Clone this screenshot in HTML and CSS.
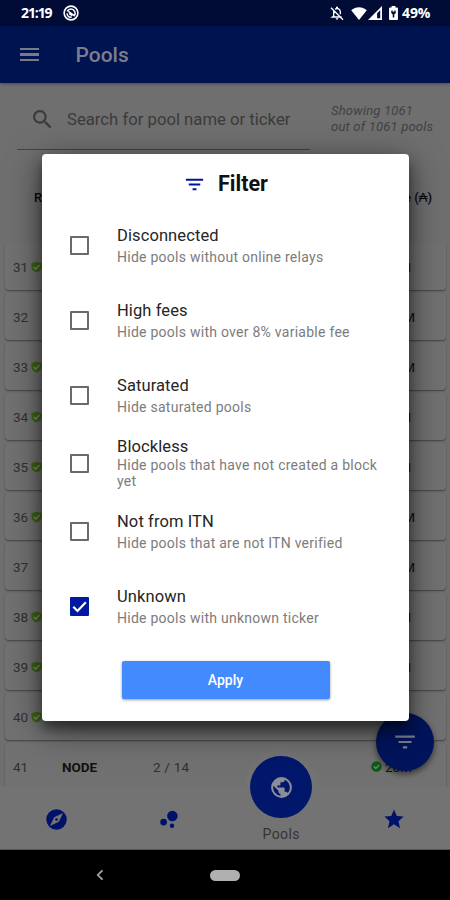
FILE: index.html
```
<!DOCTYPE html>
<html lang="en">
<head>
<meta charset="utf-8">
<title>Pools</title>
<link rel="stylesheet" href="styles.css">
</head>
<body>
<svg width="0" height="0" class="defs">
  <symbol id="shield" viewBox="0 0 22 24"><path fill="#3d6516" d="M11 1 1 4.500v7.500c0 6 4.500 9.500 10 11 5.500-1.500 10-5 10-11V4.500z"/><path fill="none" stroke="#858b7c" stroke-width="2.600" d="m5.500 12 4 4 7.500-8"/></symbol>
  <symbol id="filter" viewBox="0 0 24 24"><path d="M10 18h4v-2h-4v2zM3 6v2h18V6H3zm3 7h12v-2H6v2z"/></symbol>
</svg>
<div class="phone">
  <div class="status">
    <span class="clock">21:19</span>
    <svg class="app-mark" viewBox="0 0 24 24"><circle cx="12" cy="12" r="10.300" fill="none" stroke="#fff" stroke-width="2.400"/><path fill="none" stroke="#fff" stroke-width="2.200" d="M6 9.500c3-4.500 9-4.500 11.500 0 1.500 3 .5 5-.5 6.500L8 9.500M6 12.500c0 4 3 6.500 7 5.500M9 13l5 3"/></svg>
    <span class="grow"></span>
    <svg class="bell" viewBox="0 0 24 24"><path fill="none" stroke="#fff" stroke-width="2" d="M7 9v7.500L5 18h14M9 6.500c4-3 8 0 8 4V14M3 4l18 18"/><path fill="#fff" d="M10 20h4a2 2 0 0 1-4 0zM10.500 2.500h3V6h-3z"/></svg>
    <svg class="wifi" viewBox="0 0 24 20"><path fill="#fff" d="M12 20 0 5c7-6 17-6 24 0z"/></svg>
    <svg class="signal" viewBox="0 0 20 20"><path fill="#fff" d="M0 20 20 0v20z"/><path fill="#000c35" d="M13 10.500 17.500 6v11.500H13z"/></svg>
    <svg class="battery" viewBox="0 0 14 22"><path fill="#fff" d="M1.500 2.500H4V0h6v2.500h2.500A1.500 1.500 0 0 1 14 4v16.500a1.500 1.500 0 0 1-1.500 1.500h-11A1.500 1.500 0 0 1 0 20.500V4a1.500 1.500 0 0 1 1.500-1.500z"/><path fill="#000c35" d="M3.500 7h2.200v2h2.600V7h2.200v4L8.200 13.500V18H5.800v-4.500L3.500 11z"/></svg>
    <span class="percent">49%</span>
  </div>
  <header class="appbar">
    <span class="menu"><i></i><i></i><i></i></span>
    <h1>Pools</h1>
  </header>
  <div class="search-row">
    <div class="search">
      <svg viewBox="0 0 24 24"><path d="M15.500 14h-.8l-.3-.3A6.500 6.500 0 1 0 13.700 14.400l.3.300v.8l5 5 1.500-1.500zm-6 0a4.500 4.500 0 1 1 0-9 4.500 4.500 0 0 1 0 9z"/></svg>
      <span>Search for pool name or ticker</span>
    </div>
    <p class="count">Showing 1061<br>out of 1061 pools</p>
  </div>
  <div class="thead"><span>Rank</span><span class="stake">Stake (₳)</span></div>
  <main class="list">
    <div class="card"><span class="rank">31</span><svg class="shield"><use href="#shield"/></svg><span class="amount dense">20M</span></div>
    <div class="card"><span class="rank">32</span><span class="amount">20M</span></div>
    <div class="card"><span class="rank">33</span><svg class="shield"><use href="#shield"/></svg><span class="amount">20M</span></div>
    <div class="card"><span class="rank">34</span><svg class="shield"><use href="#shield"/></svg><span class="amount dense">20M</span></div>
    <div class="card"><span class="rank">35</span><svg class="shield"><use href="#shield"/></svg><span class="amount dense">20M</span></div>
    <div class="card"><span class="rank">36</span><svg class="shield"><use href="#shield"/></svg><span class="amount">20M</span></div>
    <div class="card"><span class="rank">37</span><span class="amount">20M</span></div>
    <div class="card"><span class="rank">38</span><svg class="shield"><use href="#shield"/></svg><span class="amount dense">20M</span></div>
    <div class="card"><span class="rank">39</span><svg class="shield"><use href="#shield"/></svg><span class="amount dense">20M</span></div>
    <div class="card"><span class="rank">40</span><svg class="shield"><use href="#shield"/></svg></div>
    <div class="card last"><span class="rank">41</span><b class="ticker">NODE</b><span class="blocks">2 / 14</span>
      <svg class="ok" viewBox="0 0 24 24"><circle cx="12" cy="12" r="11.500" fill="#0c5c18"/><path fill="none" stroke="#7b8c7d" stroke-width="2.800" d="m6.500 12 4 4 7.500-7.500"/></svg><span class="node-amount">20M</span></div>
  </main>
  <nav class="tabs">
    <span class="tab"><svg class="compass" viewBox="0 0 24 24"><circle cx="12" cy="12" r="11.700"/><path fill="#737373" d="m19.500 4.500-4.800 10.200-10.200 4.800L9.300 9.300z"/><circle cx="12" cy="12" r="1.500"/></svg></span>
    <span class="tab"><svg class="bubbles" viewBox="0 0 24 24"><circle cx="16.500" cy="8" r="7"/><circle cx="4.800" cy="16" r="4.500"/><circle cx="16" cy="21" r="2.900"/></svg></span>
    <span class="tab active"><span class="orb"><svg viewBox="0 0 24 24"><path d="M12 2a10 10 0 1 0 0 20 10 10 0 0 0 0-20zm-1 17.900A8 8 0 0 1 4.200 10.200L9 15v1a2 2 0 0 0 2 2zm6.900-2.500A2 2 0 0 0 16 16h-1v-3a1 1 0 0 0-1-1H8v-2h2a1 1 0 0 0 1-1V7h2a2 2 0 0 0 2-2v-.4a8 8 0 0 1 2.900 12.800z"/></svg></span><span class="label">Pools</span></span>
    <span class="tab"><svg class="star" viewBox="0 0 24 24"><path d="m12 17.800 6.600 4.200-1.700-7.600 5.600-5.100-7.500-.6L12 1.500 9 8.700l-7.500.6 5.600 5.100L5.400 22z"/></svg></span>
  </nav>
  <div class="sysnav"><svg class="back" viewBox="0 0 10 14"><path d="M8.500 1.500 3 7l5.500 5.500"/></svg><span class="pill"></span></div>
  <div class="fab"><svg><use href="#filter"/></svg></div>

  <section class="dialog">
    <h2><svg><use href="#filter"/></svg>Filter</h2>
    <label class="option"><span class="box"></span><span class="copy"><span class="name">Disconnected</span><small>Hide pools without online relays</small></span></label>
    <label class="option"><span class="box"></span><span class="copy"><span class="name">High fees</span><small>Hide pools with over 8% variable fee</small></span></label>
    <label class="option"><span class="box"></span><span class="copy"><span class="name">Saturated</span><small>Hide saturated pools</small></span></label>
    <label class="option compact"><span class="box"></span><span class="copy"><span class="name">Blockless</span><small>Hide pools that have not created a block yet</small></span></label>
    <label class="option"><span class="box"></span><span class="copy"><span class="name">Not from ITN</span><small>Hide pools that are not ITN verified</small></span></label>
    <label class="option"><span class="box checked"><svg viewBox="0 0 19 19"><path d="m3.300 9.800 4.200 4.200 8.300-8.700"/></svg></span><span class="copy"><span class="name">Unknown</span><small>Hide pools with unknown ticker</small></span></label>
    <button class="apply">Apply</button>
  </section>
</div>
</body>
</html>
```
FILE: styles.css
```
* { box-sizing: border-box; }
body { margin: 0; font-family: Roboto, "Liberation Sans", sans-serif; background: #000; }
.defs { position: absolute; }
.phone { position: relative; width: 450px; height: 900px; overflow: hidden; background: #6f6f6f; display: flex; flex-direction: column; }
.status { height: 26px; flex: none; background: #000c35; color: #fff; display: flex; align-items: center; padding: 0 19px 0 21px; font: 700 14px/26px "Open Sans", Roboto, sans-serif; }
.clock { letter-spacing: -1.1px; width: 42px; }
.app-mark { width: 16px; height: 16px; }
.grow { flex: 1; }
.bell { width: 16px; height: 16px; }
.wifi { width: 16px; height: 13px; margin-left: 6px; }
.signal { width: 14px; height: 14px; margin-left: 1px; }
.battery { width: 9px; height: 14px; margin: 0 4px 0 7px; }
.percent { letter-spacing: -.1px; width: 29px; white-space: nowrap; }
.appbar { height: 57px; flex: none; background: #001351; display: flex; align-items: center; padding-left: 20px; position: relative; z-index: 1; box-shadow: 0 1px 3px #0005; }
.menu { width: 19px; display: grid; gap: 3.500px; margin-right: 36.500px; }
.menu i { height: 2.200px; background: #777b88; }
.appbar h1 { margin: 0; font-size: 21px; font-weight: 500; color: #7b7e8c; }
.search-row { height: 67px; flex: none; display: flex; padding-left: 17px; }
.search { width: 293px; display: flex; align-items: center; border-bottom: 1px solid #444; padding: 6px 0 0 13px; font-size: 16.700px; color: #3b3b3b; white-space: nowrap; }
.search svg { width: 25px; height: 25px; margin-right: 12px; fill: #3a3a3a; }
.count { margin: 20px 0 0 21px; font-size: 13px; line-height: 16px; font-style: italic; letter-spacing: .2px; color: #414141; white-space: nowrap; }
.thead { height: 93px; flex: none; display: flex; justify-content: space-between; padding: 40px 18px 0 34px; font-size: 13px; line-height: 16px; font-weight: 500; color: #080808; }
.list { height: 544px; flex: none; padding: 0 4px 0 5px; overflow: hidden; display: flex; flex-direction: column; gap: 3px; }
.card { height: 47px; flex: none; border-radius: 4px; background: #717171; box-shadow: 0 1px 1.500px #0006; display: flex; align-items: center; padding: 0 31px 0 8px; font-size: 13.500px; color: #303030; }
.rank { width: 18px; }
.shield { width: 11px; height: 12px; }
.amount { margin-left: auto; color: #111; font-weight: 400; }
.amount.dense { margin-right: 4px; }
.card.last { color: #303030; padding-right: 18px; }
.ticker { width: 91px; margin-left: 31px; font-size: 13.500px; font-weight: 700; color: #111; }
.last .blocks { width: 218px; letter-spacing: .2px; }
.ok { width: 11px; height: 11px; flex: none; }
.node-amount { margin-left: 3px; color: #111; }
.tabs { height: 63px; flex: none; background: #737373; display: grid; grid-template-columns: repeat(4, 112.500px); position: relative; border-bottom: 1px solid #555; }
.tab { display: flex; justify-content: center; align-items: center; padding-top: 2px; fill: #00116a; }
.compass { width: 21px; height: 21px; }
.bubbles { width: 18px; height: 18px; }
.star { width: 22px; height: 22px; }
.tab.active { flex-direction: column; justify-content: flex-start; margin-top: -31px; padding-top: 0; }
.orb { width: 62px; height: 62px; flex: none; border-radius: 50%; background: #00176c; display: grid; place-items: center; box-shadow: 0 0 0 5px #737373; }
.orb svg { width: 25px; height: 25px; fill: #8b8d98; }
.label { margin-top: 8px; font-size: 14px; line-height: 17px; letter-spacing: .4px; color: #333; }
.sysnav { flex: 1; background: #000; display: flex; align-items: center; padding-left: 95px; }
.back { width: 9px; height: 12px; fill: none; stroke: #aaa; stroke-width: 2; }
.pill { width: 30px; height: 11px; border-radius: 6px; background: #b0b0b0; margin-left: 106px; }
.fab { position: absolute; left: 376px; top: 713px; width: 58px; height: 58px; border-radius: 50%; background: #00145c; display: grid; place-items: center; box-shadow: 0 3px 6px #0008; }
.fab svg { width: 26px; height: 26px; fill: #7b7e91; }
.dialog { position: absolute; left: 42px; top: 154px; width: 367px; height: 567px; background: #fff; border-radius: 4px; box-shadow: 0 8px 12px #0006, 0 8px 34px #0008; display: flex; flex-direction: column; }
.dialog h2 { height: 53.500px; flex: none; margin: 0; padding: 7px 0 0 141px; display: flex; align-items: flex-start; font-size: 21.500px; line-height: 46px; font-weight: 700; color: #111; }
.dialog h2 svg { width: 23px; height: 23px; margin: 12px 12px 0 0; fill: #00139c; }
.option { height: 75px; flex: none; display: flex; align-items: center; padding-left: 28px; }
.box { width: 19px; height: 19px; flex: none; border: 2px solid #6a6a6a; border-radius: 1px; }
.box.checked { background: #0019a0; border: 0; }
.box svg { display: block; width: 19px; height: 19px; fill: none; stroke: #fff; stroke-width: 2.200; }
.copy { margin: 0 0 0 28px; width: 268px; display: flex; flex-direction: column; }
.name { font-size: 16.500px; line-height: 20px; color: #252525; letter-spacing: .1px; }
.copy small { margin-top: 3px; font-size: 14px; line-height: 16px; color: #7c7c7c; letter-spacing: .26px; }
.option.compact { height: 61.500px; }
.compact .copy small { margin-top: 0; }
.apply { width: 208px; height: 38px; margin: 16.500px 0 0 79.500px; flex: none; border: 0; border-radius: 2px; background: #448aff; box-shadow: 0 1px 3px #0006; color: #fff; font: 500 14px Roboto, sans-serif; padding-top: 2px; }
```
